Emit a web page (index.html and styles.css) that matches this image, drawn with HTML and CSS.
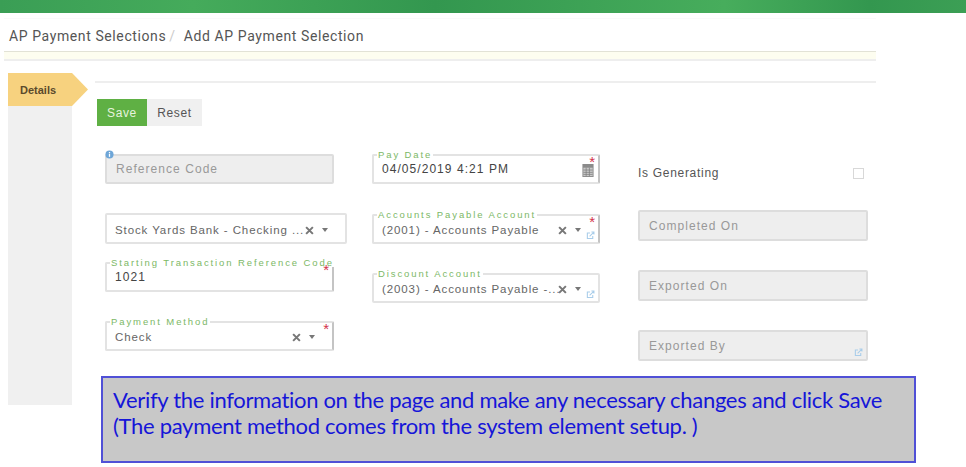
FILE: index.html
```html
<!DOCTYPE html>
<html lang="en">
	<head>
		<meta charset="UTF-8" />
		<title>Add AP Payment Selection</title>
		<link rel="stylesheet" href="styles.css">
	</head>
	<body>
		<div class="topbar"></div>

		<div class="crumbs">
			<span>AP Payment Selections</span>
			<span class="crumb-sep">/</span>
			<span>Add AP Payment Selection</span>
		</div>
		<div class="notice"></div>

		<div class="layout">
			<div class="tabs">
				<div class="tab">Details</div>
				<div class="tab-fill"></div>
			</div>

			<div class="content">
				<div class="buttons">
					<button class="btn btn-save">Save</button>
					<button class="btn btn-reset">Reset</button>
				</div>

				<div class="columns">
					<div class="col">
						<div class="field readonly">
							<svg class="info-icon" viewBox="0 0 10 10">
								<circle cx="5" cy="5" r="4.5" fill="#6ea6d8" />
								<rect x="4.3" y="4.2" width="1.4" height="3.4" fill="#fff" />
								<rect x="4.3" y="2.2" width="1.4" height="1.3" fill="#fff" />
							</svg>
							<span class="placeholder">Reference Code</span>
						</div>

						<div class="field wide gap-29">
							<span class="value grey">Stock Yards Bank - Checking ...</span>
							<svg class="clear" viewBox="0 0 8 8"><path d="M1 1l6 6M7 1l-6 6" /></svg>
							<span class="caret"></span>
						</div>

						<div class="field required gap-18">
							<label>Starting Transaction Reference Code</label>
							<span class="value">1021</span>
						</div>

						<div class="field required gap-29">
							<label>Payment Method</label>
							<span class="value grey">Check</span>
							<svg class="clear" viewBox="0 0 8 8"><path d="M1 1l6 6M7 1l-6 6" /></svg>
							<span class="caret"></span>
						</div>
					</div>

					<div class="col col-mid">
						<div class="field required">
							<label>Pay Date</label>
							<span class="value">04/05/2019 4:21 PM</span>
							<svg class="cal-icon" viewBox="0 0 12 14">
								<rect width="12" height="14" fill="#8b8b8b" />
								<rect x="1" y="4" width="10" height="9" fill="#c9c9c9" />
								<path d="M1 6.5h10M1 9h10M1 11.2h10M4 4v9M7.5 4v9" stroke="#7d7d7d" stroke-width="0.8" />
							</svg>
						</div>

						<div class="field required gap-30">
							<label>Accounts Payable Account</label>
							<span class="value grey">(2001) - Accounts Payable</span>
							<svg class="clear" viewBox="0 0 8 8"><path d="M1 1l6 6M7 1l-6 6" /></svg>
							<span class="caret"></span>
							<svg class="link-icon" viewBox="0 0 10 10">
								<path d="M7.5 5.5v2.8h-6v-6h3" />
								<path d="M4 6l4.5-4.5M6 1.2h2.8v2.8" />
							</svg>
						</div>

						<div class="field gap-29">
							<label>Discount Account</label>
							<span class="value grey">(2003) - Accounts Payable -...</span>
							<svg class="clear" viewBox="0 0 8 8"><path d="M1 1l6 6M7 1l-6 6" /></svg>
							<span class="caret"></span>
							<svg class="link-icon" viewBox="0 0 10 10">
								<path d="M7.5 5.5v2.8h-6v-6h3" />
								<path d="M4 6l4.5-4.5M6 1.2h2.8v2.8" />
							</svg>
						</div>
					</div>

					<div class="col col-last">
						<div class="check-row">
							<span>Is Generating</span>
							<span class="checkbox"></span>
						</div>

						<div class="field readonly tall gap-25">
							<span class="placeholder">Completed On</span>
						</div>
						<div class="field readonly tall gap-29">
							<span class="placeholder">Exported On</span>
						</div>
						<div class="field readonly tall gap-29">
							<span class="placeholder">Exported By</span>
							<svg class="link-icon" viewBox="0 0 10 10">
								<path d="M7.5 5.5v2.8h-6v-6h3" />
								<path d="M4 6l4.5-4.5M6 1.2h2.8v2.8" />
							</svg>
						</div>
					</div>
				</div>
			</div>
		</div>

		<div class="callout">
			Verify the information on the page and make any necessary changes and click Save<br />
			(The payment method comes from the system element setup. )
		</div>
	</body>
</html>
```

FILE: styles.css
```css
html,
body {
	height: 100%;
}

body {
	margin: 0;
	background: #fff;
	font-family: 'Liberation Sans', Arial, sans-serif;
	color: #555;
	overflow: hidden;
}

.topbar {
	height: 13px;
	background: linear-gradient(90deg, #3a9e55 0%, #45ab5b 20%, #33974f 45%, #47ad5c 75%, #33974f 90%, #3c9f55 100%);
}

.crumbs {
	box-sizing: border-box;
	width: 872px;
	height: 33px;
	margin: 5px 0 0 4px;
	padding: 5px 0 0 5px;
	border-top: 1px solid #fafafa;
	font-family: Roboto, sans-serif;
	font-size: 14px;
	line-height: 24px;
	letter-spacing: 0.6px;
	color: #555;
}

.crumb-sep {
	margin: 0 4px 0 -1px;
	color: #ccc;
}

.notice {
	box-sizing: border-box;
	width: 872px;
	height: 10px;
	margin-left: 4px;
	background: #fdfdf0;
	border-top: 1px solid #e2e2d6;
	border-bottom: 2px solid #eee;
}

.layout {
	display: flex;
	margin: 12px 0 0 8px;
}

.tabs {
	display: flex;
	flex-direction: column;
	width: 64px;
}

.tab {
	box-sizing: border-box;
	width: 80px;
	height: 33px;
	padding-left: 12px;
	background: #f7d27f;
	clip-path: polygon(0 0, 64px 0, 100% 50%, 64px 100%, 0 100%);
	font-size: 11px;
	font-weight: bold;
	line-height: 34px;
	color: #5b4a2c;
}

.tab-fill {
	height: 299px;
	background: #f0f0f0;
}

.content {
	box-sizing: border-box;
	width: 781px;
	height: 320px;
	margin: 8px 0 0 23px;
	padding-top: 16px;
	border-top: 2px solid #eee;
}

.buttons {
	display: flex;
	margin-left: 2px;
}

.btn {
	height: 27px;
	padding: 0;
	border: none;
	font-family: 'Liberation Sans', Arial, sans-serif;
	font-size: 12px;
	letter-spacing: 0.6px;
}

.btn-save {
	width: 50px;
	background: #5fb044;
	color: #e6f3de;
}

.btn-reset {
	width: 55px;
	background: #f0f0f0;
	color: #555;
}

.columns {
	display: flex;
	margin: 28px 0 0 10px;
}

.col {
	display: flex;
	flex: none;
	flex-direction: column;
	width: 229px;
	margin-right: 38px;
}

.col-mid {
	width: 228px;
}

.col-last {
	width: 230px;
	margin-right: 0;
}

.field {
	box-sizing: border-box;
	position: relative;
	flex: none;
	display: flex;
	align-items: center;
	height: 30px;
	padding: 0 8px;
	border: 2px solid #e3e3e3;
	border-radius: 2px;
	background: #fff;
	font-size: 12px;
	letter-spacing: 1.05px;
}

.field.required {
	border-right-color: #c4c4c4;
}

/* red marker in the corner of required fields */
.field.required::after {
	content: "*";
	position: absolute;
	top: 4px;
	right: 3px;
	font-size: 15px;
	line-height: 4px;
	letter-spacing: 0;
	color: #d2324a;
}

.field.wide {
	width: 242px;
	height: 31px;
}

.field.tall {
	height: 31px;
}

.field.readonly {
	background: #eee;
	border-color: #ddd;
}

.gap-18 {
	margin-top: 18px;
}

.gap-25 {
	margin-top: 25px;
}

.gap-29 {
	margin-top: 29px;
}

.gap-30 {
	margin-top: 30px;
}

.field label {
	position: absolute;
	top: -6px;
	left: 3px;
	padding: 0 1px;
	background: #fff;
	font-size: 9.5px;
	line-height: 9px;
	letter-spacing: 1.9px;
	white-space: nowrap;
	color: #7cb866;
}

.value {
	flex: 1;
	white-space: nowrap;
	color: #444;
}

/* select values run a touch narrower than typed ones */
.value.grey {
	padding-top: 2px;
	font-size: 11.5px;
	letter-spacing: 0.9px;
	color: #666;
}

.placeholder {
	margin-left: 1px;
	color: #999;
}

.clear {
	position: absolute;
	top: 50%;
	right: 31px;
	width: 9px;
	height: 9px;
	margin-top: -3px;
	fill: none;
	stroke: #777;
	stroke-width: 1.8;
}

.caret {
	position: absolute;
	top: 50%;
	right: 17px;
	margin-top: -1px;
	border-top: 4px solid #777;
	border-left: 3px solid transparent;
	border-right: 3px solid transparent;
}

.link-icon {
	position: absolute;
	right: 3px;
	bottom: 2px;
	width: 9px;
	height: 9px;
	fill: none;
	stroke: #a9cdea;
	stroke-width: 1.2;
}

.info-icon {
	position: absolute;
	top: -6px;
	left: -2px;
	width: 9px;
	height: 9px;
}

.cal-icon {
	position: absolute;
	top: 8px;
	right: 4px;
	width: 12px;
	height: 13px;
}

.check-row {
	display: flex;
	align-items: center;
	justify-content: space-between;
	flex: none;
	height: 24px;
	margin-top: 7px;
	padding-right: 4px;
	font-size: 12px;
	letter-spacing: 0.7px;
	color: #555;
}

.checkbox {
	box-sizing: border-box;
	width: 11px;
	height: 11px;
	border: 1px solid #d8d8d8;
}

/* instruction box sits over the bottom of the form */
.callout {
	box-sizing: border-box;
	position: absolute;
	left: 101px;
	top: 376px;
	width: 815px;
	height: 87px;
	padding: 9px 10px 0;
	background: #c8c8c8;
	border: 2px solid #5050d6;
	font-family: Lato, sans-serif;
	font-size: 22px;
	line-height: 26px;
	letter-spacing: -0.3px;
	color: #1616d8;
	white-space: nowrap;
}
```
